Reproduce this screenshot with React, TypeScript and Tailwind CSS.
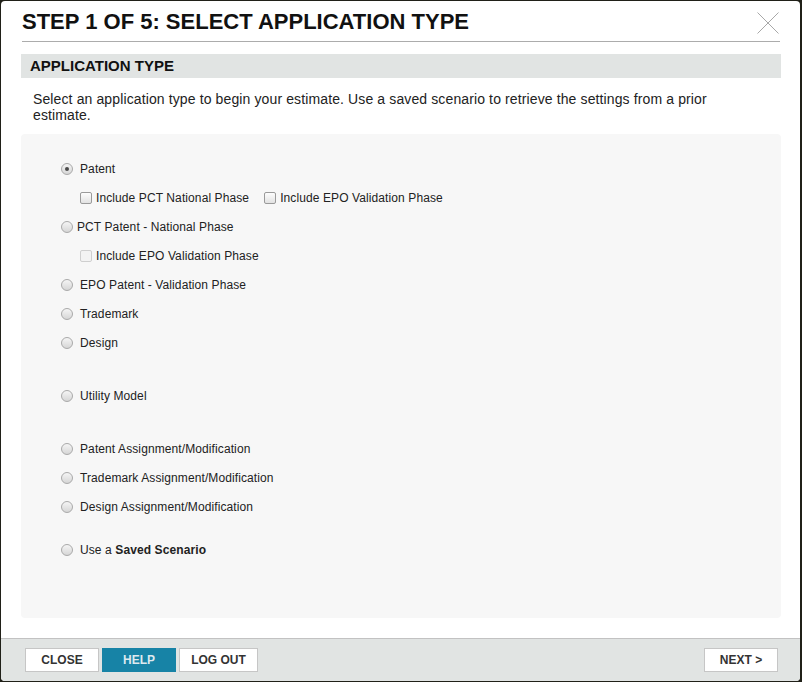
import React from 'react'

const font = "font-['Liberation_Sans',Arial,sans-serif]"

function Radio({ checked = false }: { checked?: boolean }) {
  return (
    <span className="w-[12px] h-[12px] shrink-0 rounded-full border border-[#a9a9a9] bg-linear-to-b from-[#f5f5f5] to-[#d6d6d6] flex items-center justify-center">
      {checked && <span className="w-[4px] h-[4px] rounded-full bg-[#4a4a4a]" />}
    </span>
  )
}

function Checkbox({ disabled = false }: { disabled?: boolean }) {
  return (
    <span
      className={`w-[12px] h-[12px] shrink-0 rounded-[2px] border ${
        disabled ? 'border-[#cfcfcf] bg-[#f3f3f3]' : 'border-[#9a9a9a] bg-linear-to-b from-[#fdfdfd] to-[#e2e2e2]'
      }`}
    />
  )
}

function RadioRow({ label, checked, tight, className = '' }: { label: React.ReactNode; checked?: boolean; tight?: boolean; className?: string }) {
  return (
    <div className={`h-[29px] flex items-center pl-[40px] ${className}`}>
      <Radio checked={checked} />
      <span className={`${tight ? 'ml-[4px]' : 'ml-[7px]'} text-[12px] tracking-[0.1px] text-[#222]`}>{label}</span>
    </div>
  )
}

function CheckRow({ items }: { items: { label: string; disabled?: boolean }[] }) {
  return (
    <div className="h-[29px] flex items-center pl-[59px] gap-[15px]">
      {items.map((it) => (
        <div key={it.label} className="flex items-center">
          <Checkbox disabled={it.disabled} />
          <span className="ml-[4px] text-[12px] tracking-[0.1px] text-[#222]">{it.label}</span>
        </div>
      ))}
    </div>
  )
}

function FooterButton({ children, primary }: { children: React.ReactNode; primary?: boolean }) {
  return (
    <button
      className={`h-[24px] border text-[12px] font-bold ${
        primary ? 'bg-[#1783a6] border-[#1783a6] text-[#dde9ef]' : 'bg-white border-[#c6c6c6] text-[#333]'
      }`}
    >
      {children}
    </button>
  )
}

export default function App() {
  return (
    <div className={`w-[802px] h-[682px] bg-[#202018] pt-px pl-px pr-[2px] pb-px ${font}`}>
      <div className="w-full h-full bg-white rounded-[4px] flex flex-col overflow-hidden">
        {/* title */}
        <div className="h-[40px] flex justify-between items-start pl-[21px] pr-[21px] pt-[10px]">
          <h1 className="text-[22px] leading-[22px] font-bold text-[#111]">STEP 1 OF 5: SELECT APPLICATION TYPE</h1>
          <svg width="22" height="22" viewBox="0 0 22 22" className="mt-px">
            <path d="M0.5 0.5 L21.5 21.5 M21.5 0.5 L0.5 21.5" stroke="#a8a8a8" strokeWidth="1" fill="none" />
          </svg>
        </div>
        <div className="ml-[21px] w-[758px] h-px bg-[#acacac]" />

        {/* section */}
        <div className="ml-[20px] w-[760px] mt-[12px] h-[24px] bg-[#e1e4e3] pl-[9px]">
          <h2 className="text-[15px] leading-[24px] font-bold text-[#111]">APPLICATION TYPE</h2>
        </div>
        <p className="ml-[32px] w-[720px] mt-[13px] text-[14px] leading-[16px] tracking-[0.12px] text-[#222]">
          Select an application type to begin your estimate. Use a saved scenario to retrieve the settings from a prior estimate.
        </p>

        <div className="ml-[20px] w-[760px] mt-[11px] h-[484px] bg-[#f7f7f7] rounded-[4px] pt-[20px]">
          <RadioRow label="Patent" checked />
          <CheckRow items={[{ label: 'Include PCT National Phase' }, { label: 'Include EPO Validation Phase' }]} />
          <RadioRow label="PCT Patent - National Phase" tight />
          <CheckRow items={[{ label: 'Include EPO Validation Phase', disabled: true }]} />
          <RadioRow label="EPO Patent - Validation Phase" />
          <RadioRow label="Trademark" />
          <RadioRow label="Design" />
          <RadioRow label="Utility Model" className="mt-[24px]" />
          <RadioRow label="Patent Assignment/Modification" className="mt-[24px]" />
          <RadioRow label="Trademark Assignment/Modification" />
          <RadioRow label="Design Assignment/Modification" />
          <RadioRow
            label={
              <>
                Use a <b>Saved Scenario</b>
              </>
            }
            className="mt-[14px]"
          />
        </div>

        <div className="flex-1" />

        {/* footer */}
        <div className="h-[43px] border-t border-[#c2c2c2] bg-[#e1e4e3] pt-[9px] pl-[24px] pr-[22px] flex items-start justify-between">
          <div className="flex gap-[3px]">
            <div className="w-[74px] flex flex-col"><FooterButton>CLOSE</FooterButton></div>
            <div className="w-[74px] flex flex-col"><FooterButton primary>HELP</FooterButton></div>
            <div className="w-[79px] flex flex-col"><FooterButton>LOG OUT</FooterButton></div>
          </div>
          <div className="w-[74px] flex flex-col"><FooterButton>NEXT &gt;</FooterButton></div>
        </div>
      </div>
    </div>
  )
}
